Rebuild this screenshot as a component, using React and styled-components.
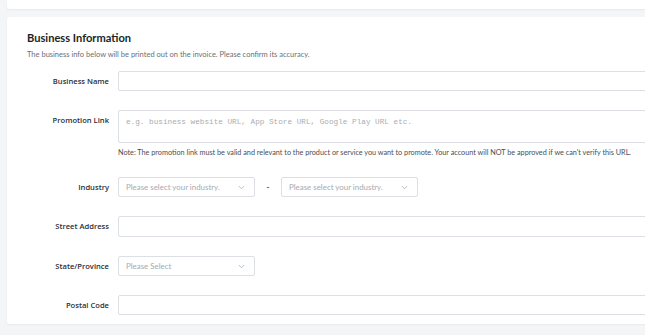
import React from "react";
import styled, { createGlobalStyle } from "styled-components";

const Global = createGlobalStyle`
  html, body { margin: 0; padding: 0; background: #f3f5f7; overflow: hidden; }
  body { font-family: Lato, "Open Sans", sans-serif; width: 645px; height: 335px; }
  * { box-sizing: border-box; }
`;

const Page = styled.div`
  padding-left: 7px;
  display: flex;
  flex-direction: column;
  gap: 8px;
  width: 700px;
`;

const TopCard = styled.div`
  height: 9px;
  background: #fff;
  border-radius: 0 0 3px 3px;
  box-shadow: 0 1px 2px rgba(0, 0, 0, 0.05);
`;

const Card = styled.div`
  background: #fff;
  border-radius: 3px;
  box-shadow: 0 1px 2px rgba(0, 0, 0, 0.05);
  padding: 13px 0 9px 20px;
`;

const Title = styled.h2`
  margin: 0;
  font-size: 11.1px;
  font-weight: 700;
  color: #1c1f24;
  line-height: 16px;
`;

const Sub = styled.p`
  margin: 4px 0 0;
  font-size: 7.5px;
  color: #6b6f76;
  line-height: 10px;
`;

const Form = styled.div`
  display: grid;
  grid-template-columns: 82px 1fr;
  column-gap: 9px;
  row-gap: 19px;
  margin-top: 11px;
  align-items: start;
`;

const Label = styled.label`
  text-align: right;
  font-family: "Open Sans", Lato, sans-serif;
  font-size: 7.6px;
  font-weight: 600;
  color: #2b2f36;
  line-height: 20px;
  white-space: nowrap;
`;

const Field = styled.div`
  display: flex;
  flex-direction: column;
`;

const Input = styled.div`
  height: ${(p) => p.$h || 20}px;
  border: 1px solid #dcdfe3;
  border-radius: 2px;
  background: #fff;
  width: 560px;
`;

const Textarea = styled(Input)`
  padding: 5px 7px;
  font-family: "Liberation Mono", "DejaVu Sans Mono", monospace;
  font-size: 7.7px;
  color: #a9adb3;
  line-height: 12px;
`;

const Note = styled.div`
  margin-top: 5px;
  font-size: 7.25px;
  color: #4a4e55;
  line-height: 10px;
  white-space: nowrap;
`;

const SelectRow = styled.div`
  display: flex;
  align-items: center;
`;

const Select = styled.div`
  width: 137px;
  height: 20px;
  border: 1px solid #dcdfe3;
  border-radius: 2px;
  background: #fff;
  display: flex;
  align-items: center;
  justify-content: space-between;
  padding: 0 9px 0 7px;
  font-size: 7.9px;
  color: #a6aab0;
`;

const Dash = styled.span`
  width: 26px;
  text-align: center;
  font-size: 8px;
  font-weight: 700;
  color: #444;
  line-height: 1;
`;

const Chevron = () => (
  <svg width="7" height="5" viewBox="0 0 7 5" fill="none">
    <path d="M0.8 1 L3.5 3.8 L6.2 1" stroke="#b5b9bf" strokeWidth="0.9" />
  </svg>
);

const SelectBox = ({ text }) => (
  <Select>
    <span>{text}</span>
    <Chevron />
  </Select>
);

export default function App() {
  return (
    <>
      <Global />
      <Page>
        <TopCard />
        <Card>
          <Title>Business Information</Title>
          <Sub>The business info below will be printed out on the invoice. Please confirm its accuracy.</Sub>
          <Form>
            <Label>Business Name</Label>
            <Field>
              <Input />
            </Field>

            <Label>Promotion Link</Label>
            <Field>
              <Textarea $h={33}>e.g. business website URL, App Store URL, Google Play URL etc.</Textarea>
              <Note>
                Note: The promotion link must be valid and relevant to the product or service you want to promote. Your account will NOT be approved if we can't verify this URL.
              </Note>
            </Field>

            <Label>Industry</Label>
            <SelectRow>
              <SelectBox text="Please select your industry." />
              <Dash>-</Dash>
              <SelectBox text="Please select your industry." />
            </SelectRow>

            <Label>Street Address</Label>
            <Field>
              <Input $h={21} />
            </Field>

            <Label>State/Province</Label>
            <SelectRow>
              <SelectBox text="Please Select" />
            </SelectRow>

            <Label>Postal Code</Label>
            <Field>
              <Input />
            </Field>
          </Form>
        </Card>
      </Page>
    </>
  );
}
